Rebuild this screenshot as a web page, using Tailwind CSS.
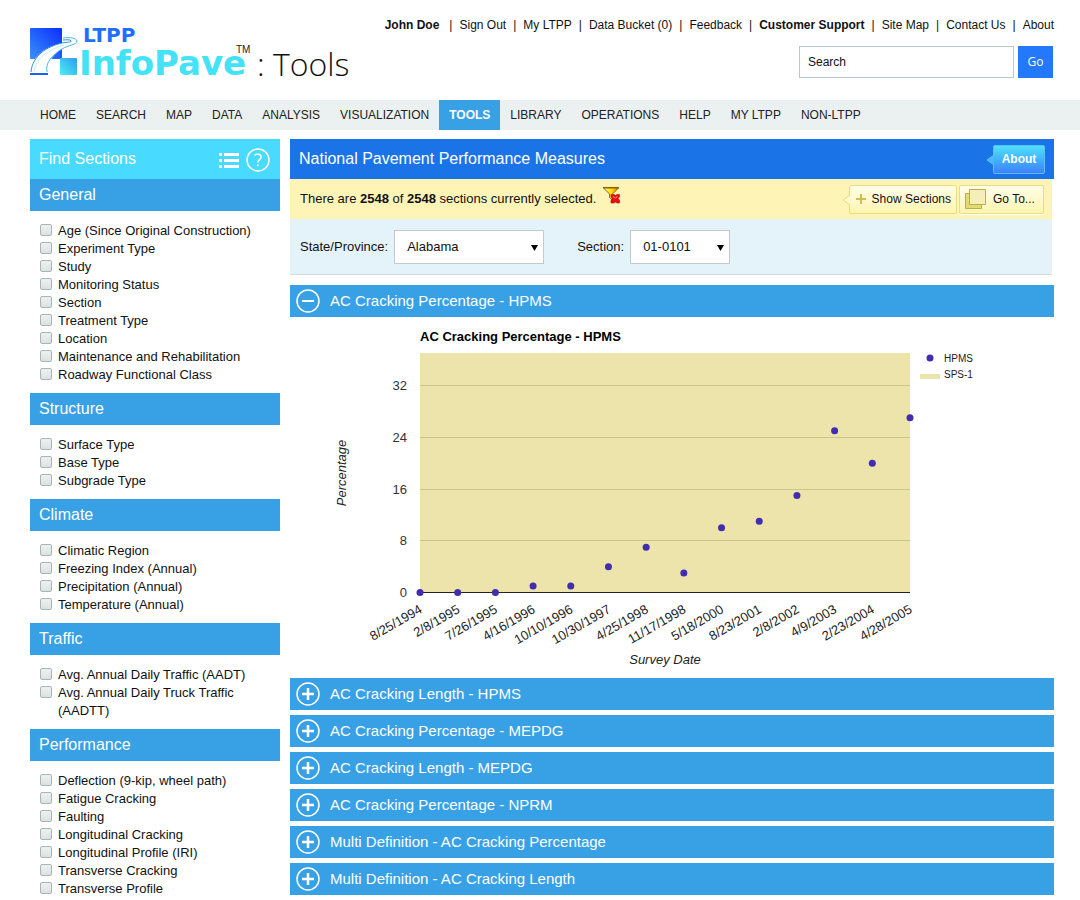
<!DOCTYPE html>
<html lang="en">
    <head>
        <meta charset="UTF-8" />
        <meta name="viewport" content="width=device-width, initial-scale=1.0" />
        <title>LTPP InfoPave: Tools</title>
        <script src="https://cdn.jsdelivr.net/npm/@tailwindcss/browser@4"></script>
    </head>
    <body class="bg-white font-['Liberation_Sans',Arial,sans-serif] text-[13px] leading-[18px] text-[#111]">
        <header class="flex h-[100px] items-start justify-between pr-[26px] pl-[30px]">
            <a href="#" class="mt-4 flex" aria-label="LTPP InfoPave Tools">
                <svg width="330" height="74" viewBox="0 -10 330 74">
                    <defs>
                        <linearGradient id="tile" x1="0" y1="1" x2="1" y2="0">
                            <stop offset="0" stop-color="#3a92f6" />
                            <stop offset="1" stop-color="#0a2cff" />
                        </linearGradient>
                        <linearGradient id="aqua" x1="1" y1="0" x2="0" y2="1">
                            <stop offset="0" stop-color="#2f9bf0" />
                            <stop offset="1" stop-color="#4cf0f0" />
                        </linearGradient>
                    </defs>
                    <rect x="0" y="2" width="32" height="31" rx="1" fill="url(#tile)" />
                    <rect x="30" y="32" width="17" height="17" rx="1" fill="url(#aqua)" />
                    <path
                        d="M0 48C1 34 10 22 32 17L41 15L32 14V12C41 11 47 12 47 15C47 18 39 19 33 22C24 28 16 36 18 48Z"
                        fill="#fff"
                    />
                    <path d="M1 46C2 34 11 22 32 17C38 16 42 16 41 15C40 13 36 14 33 14" fill="none" stroke="#2b8ddd" />
                    <path d="M4 46C5 35 14 25 34 19" fill="none" stroke="#c4ecfb" />
                    <path d="M17 46C15 37 22 29 32 23C38 19 47 19 47 15C46 12 40 11 33 12" fill="none" stroke="#48b7ee" />
                    <path d="M0 48h18" stroke="#1c62e8" stroke-width="2" />
                    <text x="53" y="16" font-family="DejaVu Sans" font-size="20" font-weight="bold" fill="#1f6fff">LTPP</text>
                    <text x="49" y="49" font-family="DejaVu Sans" font-size="34" font-weight="bold" fill="#43e2f5">InfoPave</text>
                    <text x="206" y="27" font-family="Liberation Sans" font-size="10" fill="#222">TM</text>
                    <text x="227" y="50" font-family="Open Sans" font-size="32" font-weight="300" fill="#111">: Tools</text>
                </svg>
            </a>
            <div class="flex flex-col items-end">
                <nav class="mt-4 flex text-[12px]">
                    <a href="#" class="pr-[10px] font-bold">John Doe</a>
                    <a href="#" class="pr-[7px] before:mr-[7px] before:content-['|']">Sign Out</a>
                    <a href="#" class="pr-[7px] before:mr-[7px] before:content-['|']">My LTPP</a>
                    <a href="#" class="pr-[7px] before:mr-[7px] before:content-['|']">Data Bucket (0)</a>
                    <a href="#" class="pr-[7px] before:mr-[7px] before:content-['|']">Feedback</a>
                    <a href="#" class="pr-[7px] font-bold before:mr-[7px] before:font-normal before:content-['|']">Customer Support</a>
                    <a href="#" class="pr-[7px] before:mr-[7px] before:content-['|']">Site Map</a>
                    <a href="#" class="pr-[7px] before:mr-[7px] before:content-['|']">Contact Us</a>
                    <a href="#" class="before:mr-[7px] before:content-['|']">About</a>
                </nav>
                <form class="mt-3 mr-px flex gap-1">
                    <input
                        type="text"
                        value="Search"
                        aria-label="Search"
                        class="h-8 w-[215px] border border-[#b9c9c9] bg-white px-2 text-[12px]"
                    />
                    <button type="button" class="h-8 w-[35px] bg-[#2478fc] font-['Open_Sans',sans-serif] text-[12px] text-white">Go</button>
                </form>
            </div>
        </header>

        <nav class="flex h-[30px] bg-[#ebf0f0] pl-[30px] text-[12px] leading-[30px] text-[#222]">
            <a href="#" class="px-[10px]">HOME</a>
            <a href="#" class="px-[10px]">SEARCH</a>
            <a href="#" class="px-[10px]">MAP</a>
            <a href="#" class="px-[10px]">DATA</a>
            <a href="#" class="px-[10px]">ANALYSIS</a>
            <a href="#" class="px-[10px]">VISUALIZATION</a>
            <a href="#" class="bg-[#38a1e6] px-[10px] font-bold text-white">TOOLS</a>
            <a href="#" class="px-[10px]">LIBRARY</a>
            <a href="#" class="px-[10px]">OPERATIONS</a>
            <a href="#" class="px-[10px]">HELP</a>
            <a href="#" class="px-[10px]">MY LTPP</a>
            <a href="#" class="px-[10px]">NON-LTPP</a>
        </nav>

        <div class="flex gap-[10px] pt-[9px] pr-[26px] pl-[30px]">
            <aside class="w-[250px] shrink-0">
                <div class="flex h-10 items-center justify-between bg-[#48dbff] pr-[10px] pl-[9px] text-white">
                    <h2 class="text-[16px]">Find Sections</h2>
                    <div class="flex items-center gap-[7px] pt-[2px]">
                        <button type="button" aria-label="List">
                            <svg width="20" height="16" viewBox="0 0 20 16" fill="#fff">
                                <path d="M0 1h3v3H0zM5 1h15v3H5zM0 7h3v3H0zM5 7h15v3H5zM0 13h3v3H0zM5 13h15v3H5z" />
                            </svg>
                        </button>
                        <button type="button" aria-label="Help">
                            <svg width="24" height="24" viewBox="0 0 24 24" fill="none" stroke="#fff" stroke-width="1.5">
                                <circle cx="12" cy="12" r="11" />
                                <path d="M8.5 7.3c2-1.6 6.6-1.5 6.6 1.7 0 2.6-3.3 2.8-3.3 5.5" />
                                <circle cx="11.8" cy="17.3" r="1" fill="#fff" stroke="none" />
                            </svg>
                        </button>
                    </div>
                </div>
                <div id="filters"></div>
            </aside>

            <main class="min-w-0 flex-1">
                <div class="flex h-10 items-center justify-between bg-[#1a74e8] pr-[9px] pl-[9px] text-white">
                    <h1 class="text-[16px]">National Pavement Performance Measures</h1>
                    <button
                        type="button"
                        class="relative h-[29px] w-[52px] rounded-xs border border-[#5cc0f8] bg-linear-to-b from-[#50e0ff] to-[#3f80ff] text-[12px] font-bold"
                    >
                        About
                        <svg class="absolute top-[9px] -left-2" width="8" height="10" viewBox="0 0 8 10">
                            <path d="M8 0L1 5l7 5z" fill="#49b8ff" />
                            <path d="M8 0L1 5l7 5" fill="none" stroke="#5cc0f8" />
                        </svg>
                    </button>
                </div>

                <div class="mr-[2px] flex h-10 items-center justify-between bg-[#fef4b5] pr-2 pl-[10px]">
                    <p class="flex items-center gap-[7px]">
                        <span>There are <b>2548</b> of <b>2548</b> sections currently selected.</span>
                        <button type="button" aria-label="Clear filter" class="-mt-2">
                            <svg width="17" height="17" viewBox="0 0 17 17">
                                <defs>
                                    <linearGradient id="funnel">
                                        <stop offset="0" stop-color="#fff6a0" />
                                        <stop offset=".5" stop-color="#ffe000" />
                                        <stop offset="1" stop-color="#f08a00" />
                                    </linearGradient>
                                </defs>
                                <path d="M.5 1h15L9.5 7v6L6.5 10.5V7z" fill="url(#funnel)" stroke="#6a4a20" stroke-width=".8" />
                                <path d="M0 .5h16" stroke="#9a5a00" />
                                <path d="M8 7.5h3l1.500 1L14 7.5h2.500V10L15 11.5l1.500 1.500v3H14l-1.500-1L11 16H8v-3l1.500-1.500L8 10z" fill="#e81010" stroke="#b00000" stroke-width=".6" />
                                <path d="M10 9.500l2 1.500M14.500 9.500l-2 1.500" stroke="#ff9a9a" />
                            </svg>
                        </button>
                    </p>
                    <div class="flex gap-[2px] text-[12px]">
                        <button
                            type="button"
                            class="relative flex h-[29px] w-[108px] items-center justify-between rounded-xs border border-[#e8de80] bg-linear-to-b from-[#fffde8] to-[#fef5b0] px-[5px]"
                        >
                            <svg class="absolute top-[9px] -left-2" width="8" height="10" viewBox="0 0 8 10">
                                <path d="M8 0L1 5l7 5z" fill="#fff9cc" />
                                <path d="M8 0L1 5l7 5" fill="none" stroke="#e8de80" />
                            </svg>
                            <svg width="12" height="12" viewBox="0 0 12 12" stroke="#c8c050" stroke-width="2">
                                <path d="M1 6h10M6 1v10" />
                            </svg>
                            Show Sections
                        </button>
                        <button
                            type="button"
                            class="flex h-[29px] w-[85px] items-center gap-[7px] rounded-xs border border-[#e8de80] bg-linear-to-b from-[#fffde8] to-[#fef5b0] px-[5px] shadow-[0_1px_0_#fff]"
                        >
                            <svg width="21" height="20" viewBox="0 0 21 20" stroke="#b8b048">
                                <path d="M.5 4.500h16v15H.5z" fill="#e2dc70" />
                                <path d="M4.500.5h16v15h-16z" fill="#f4efb8" />
                            </svg>
                            Go To...
                        </button>
                    </div>
                </div>

                <div class="mr-[2px] flex h-14 items-center border-b border-[#d5dcdc] bg-[#e4f3fa] pl-[10px]">
                    <label for="state" class="mr-[6px]">State/Province:</label>
                    <div class="relative mr-[33px]">
                        <select id="state" class="h-[34px] w-[150px] appearance-none border border-[#c2caca] bg-white px-3">
                            <option>Alabama</option>
                        </select>
                        <svg class="pointer-events-none absolute top-[14px] right-[6px]" width="7" height="7" viewBox="0 0 7 7"><path d="M0 1h7L3.500 7z" /></svg>
                    </div>
                    <label for="section" class="mr-[6px]">Section:</label>
                    <div class="relative">
                        <select id="section" class="h-[34px] w-[100px] appearance-none border border-[#c2caca] bg-white px-3">
                            <option>01-0101</option>
                        </select>
                        <svg class="pointer-events-none absolute top-[14px] right-[6px]" width="7" height="7" viewBox="0 0 7 7"><path d="M0 1h7L3.500 7z" /></svg>
                    </div>
                </div>

                <section class="mt-[10px]">
                    <button type="button" class="flex h-8 w-full items-center gap-[10px] bg-[#38a1e6] px-[6px] text-[15px] text-white">
                        <svg width="24" height="24" viewBox="0 0 24 24" fill="none" stroke="#fff" stroke-width="1.5">
                            <circle cx="12" cy="12" r="11" />
                            <path d="M6 12h12" stroke-width="2" />
                        </svg>
                        AC Cracking Percentage - HPMS
                    </button>
                    <svg id="chart" class="block max-w-full" width="764" height="361" viewBox="0 0 764 361"></svg>
                </section>

                <div id="panels" class="flex flex-col gap-[5px]"></div>
            </main>
        </div>

        <script>
            const filters = {
                General: [
                    'Age (Since Original Construction)',
                    'Experiment Type',
                    'Study',
                    'Monitoring Status',
                    'Section',
                    'Treatment Type',
                    'Location',
                    'Maintenance and Rehabilitation',
                    'Roadway Functional Class'
                ],
                Structure: ['Surface Type', 'Base Type', 'Subgrade Type'],
                Climate: [
                    'Climatic Region',
                    'Freezing Index (Annual)',
                    'Precipitation (Annual)',
                    'Temperature (Annual)'
                ],
                Traffic: [
                    'Avg. Annual Daily Traffic (AADT)',
                    'Avg. Annual Daily Truck Traffic (AADTT)'
                ],
                Performance: [
                    'Deflection (9-kip, wheel path)',
                    'Fatigue Cracking',
                    'Faulting',
                    'Longitudinal Cracking',
                    'Longitudinal Profile (IRI)',
                    'Transverse Cracking',
                    'Transverse Profile'
                ]
            }

            const checkbox = (label) => `
                <li>
                    <label class="flex items-start gap-[6px]">
                        <input type="checkbox" class="mt-[2px] size-3 shrink-0 appearance-none rounded-xs border border-[#a9b5b5] bg-linear-to-b from-[#eef1f1] to-[#dbe2e2]" />
                        <span>${label}</span>
                    </label>
                </li>`

            document.getElementById('filters').innerHTML = Object.entries(filters)
                .map(
                    ([title, items]) => `
                <h3 class="h-8 bg-[#38a1e6] pl-[9px] text-[16px] leading-[31px] text-white">${title}</h3>
                <ul class="pt-[11px] pr-5 pb-[9px] pl-[10px]">${items.map(checkbox).join('')}</ul>`
                )
                .join('')

            const panels = [
                'AC Cracking Length - HPMS',
                'AC Cracking Percentage - MEPDG',
                'AC Cracking Length - MEPDG',
                'AC Cracking Percentage - NPRM',
                'Multi Definition - AC Cracking Percentage',
                'Multi Definition - AC Cracking Length'
            ]

            document.getElementById('panels').innerHTML = panels
                .map(
                    (title) => `
                <button type="button" class="flex h-8 w-full items-center gap-[10px] bg-[#38a1e6] px-[6px] text-[15px] text-white">
                    <svg width="24" height="24" viewBox="0 0 24 24" fill="none" stroke="#fff" stroke-width="1.5">
                        <circle cx="12" cy="12" r="11" />
                        <path d="M6 12h12M12 6v12" stroke-width="2.5" />
                    </svg>
                    ${title}
                </button>`
                )
                .join('')

            const points = [
                ['8/25/1994', 0],
                ['2/8/1995', 0],
                ['7/26/1995', 0],
                ['4/16/1996', 1],
                ['10/10/1996', 1],
                ['10/30/1997', 4],
                ['4/25/1998', 7],
                ['11/17/1998', 3],
                ['5/18/2000', 10],
                ['8/23/2001', 11],
                ['2/8/2002', 15],
                ['4/9/2003', 25],
                ['2/23/2004', 20],
                ['4/28/2005', 27]
            ]
            const left = 130
            const right = 620
            const bottom = 275
            const x = (i) => left + (i * (right - left)) / (points.length - 1)
            const y = (v) => bottom - (v * 207) / 32

            let svg = `<text x="130" y="24" font-size="13" font-weight="bold">AC Cracking Percentage - HPMS</text>
                <rect x="${left}" y="36" width="${right - left}" height="${bottom - 36}" fill="#ece4ab" />`
            for (const tick of [0, 8, 16, 24, 32]) {
                const ty = Math.round(y(tick)) + 0.5
                svg += `<path d="M${left} ${ty}H${right}" stroke="${tick ? '#cbc48c' : '#222'}" />
                    <text x="117" y="${ty + 4}" text-anchor="end" font-size="13" fill="#333">${tick}</text>`
            }
            points.forEach(([date, value], i) => {
                svg += `<circle cx="${x(i)}" cy="${y(value) + 0.5}" r="3.5" fill="#422cb0" />
                    <text transform="translate(${x(i) + 3} 295) rotate(-30)" text-anchor="end" font-size="13" fill="#222">${date}</text>`
            })
            svg += `<text x="375" y="347" text-anchor="middle" font-size="13" font-style="italic" fill="#222">Survey Date</text>
                <text transform="translate(56 156) rotate(-90)" text-anchor="middle" font-size="13" font-style="italic" fill="#222">Percentage</text>
                <circle cx="640" cy="41" r="3.5" fill="#422cb0" />
                <text x="654" y="45" font-size="10" fill="#222">HPMS</text>
                <rect x="630" y="57" width="20" height="5" fill="#ece4ab" />
                <text x="654" y="61" font-size="10" fill="#222">SPS-1</text>`
            document.getElementById('chart').innerHTML = svg
        </script>
    </body>
</html>
